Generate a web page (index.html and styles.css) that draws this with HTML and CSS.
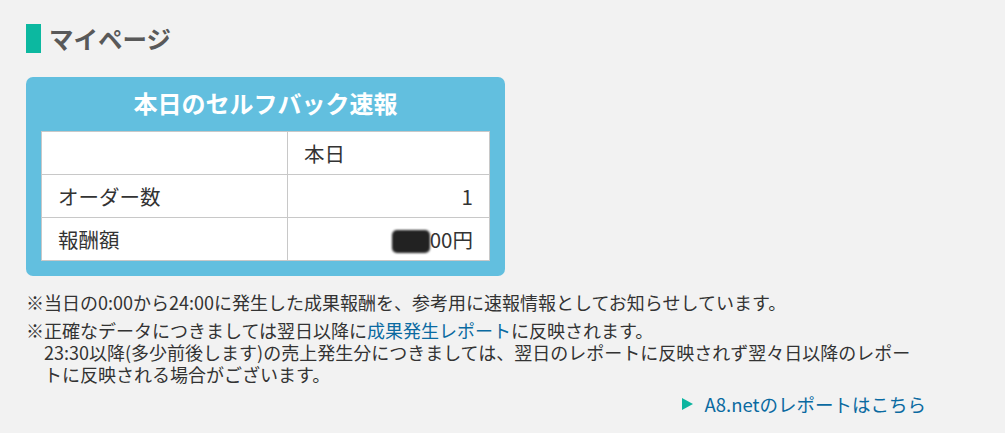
FILE: index.html
```html
<!DOCTYPE html>
<html lang="ja">
<head>
<meta charset="utf-8">
<title>マイページ</title>
<link rel="stylesheet" href="styles.css">
</head>
<body>
<main class="page">
  <h1 class="page-title">マイページ</h1>
  <section class="sb-box">
    <h2 class="sb-title">本日のセルフバック速報</h2>
    <table class="sb-table">
      <tr>
        <th class="c-label"></th>
        <th class="c-value head">本日</th>
      </tr>
      <tr>
        <td class="c-label">オーダー数</td>
        <td class="c-value num">1</td>
      </tr>
      <tr>
        <td class="c-label">報酬額</td>
        <td class="c-value num"><span class="mask"></span>00円</td>
      </tr>
    </table>
  </section>
  <div class="notes">
    <p class="note">※当日の0:00から24:00に発生した成果報酬を、参考用に速報情報としてお知らせしています。</p>
    <p class="note">※正確なデータにつきましては翌日以降に<a class="link" href="#">成果発生レポート</a>に反映されます。<br>23:30以降(多少前後します)の売上発生分につきましては、翌日のレポートに反映されず翌々日以降のレポートに反映される場合がございます。</p>
  </div>
  <div class="more">
    <a class="more-link" href="#"><span class="tri"></span>A8.netのレポートはこちら</a>
  </div>
</main>
</body>
</html>
```
FILE: styles.css
```css
html, body {
  margin: 0;
  padding: 0;
  background: #f2f2f2;
}
body {
  font-family: "Noto Sans CJK JP", "Noto Sans", sans-serif;
  color: #333;
}
.page {
  padding: 24px 0 0 26px;
  width: 900px;
}
.page-title {
  margin: 0;
  display: flex;
  align-items: center;
  height: 29px;
  font-size: 24.5px;
  font-weight: bold;
  color: #595959;
  border-left: 15px solid #0cb8a0;
  padding-left: 8px;
  line-height: 29px;
}
.sb-box {
  margin-top: 24px;
  width: 479px;
  box-sizing: border-box;
  background: #62bfdf;
  border-radius: 7px;
  padding: 0 15px 15px;
}
.sb-title {
  margin: 0;
  height: 54px;
  line-height: 52px;
  text-align: center;
  color: #fff;
  font-size: 24px;
  font-weight: bold;
}
.sb-table {
  width: 100%;
  border-collapse: collapse;
  background: #fff;
  font-size: 20.5px;
  color: #333;
}
.sb-table th, .sb-table td {
  border: 1px solid #c8c8c8;
  height: 42px;
  padding: 0 16px;
  font-weight: normal;
  text-align: left;
}
.sb-table .c-label {
  width: 213px;
}
.sb-table .num {
  text-align: right;
}
.mask {
  display: inline-block;
  width: 38px;
  height: 23px;
  background: #222;
  border-radius: 5px;
  vertical-align: -5px;
  filter: blur(1px);
}
.notes {
  margin-top: 15px;
  font-size: 18px;
  line-height: 22px;
  color: #333;
}
.note {
  margin: 0 0 6px;
  padding-left: 1em;
  text-indent: -1em;
}
.link {
  color: #0a6aa1;
  text-decoration: none;
}
.more {
  display: flex;
  justify-content: flex-end;
  margin-top: 4px;
}
.more-link {
  display: flex;
  align-items: center;
  color: #0a6aa1;
  text-decoration: none;
  font-size: 18.5px;
}
.tri {
  width: 0;
  height: 0;
  border-top: 6px solid transparent;
  border-bottom: 6px solid transparent;
  border-left: 11px solid #0cb5a0;
  margin-right: 12px;
}
```
